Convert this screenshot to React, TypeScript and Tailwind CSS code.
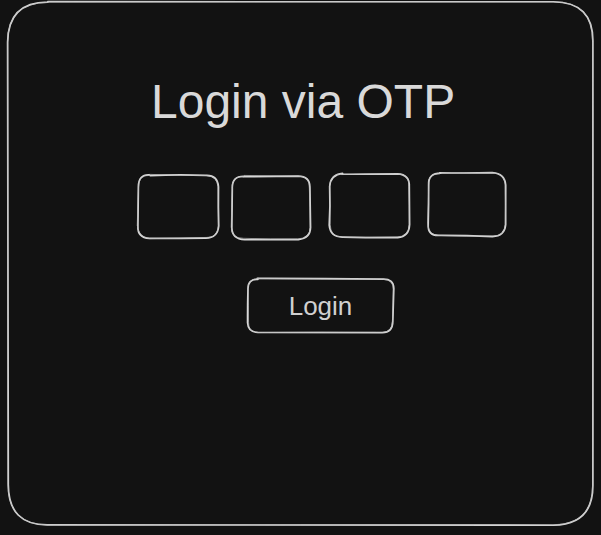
import React from 'react';

// small seeded rng so the wobble stays the same on every render
function rng(seed: number) {
  let s = seed;
  return () => {
    s = (s * 9301 + 49297) % 233280;
    return s / 233280 - 0.5;
  };
}

function sketchPath(w: number, h: number, r: number, seed: number, j: number) {
  const rand = rng(seed);
  const p = (v: number) => (v + rand() * j).toFixed(2);
  const m = (a: number, b: number) => (a + b) / 2;
  return [
    `M ${p(r)} ${p(0)}`,
    `Q ${p(m(r, w - r))} ${p(0)} ${p(w - r)} ${p(0)}`,
    `Q ${p(w)} ${p(0)} ${p(w)} ${p(r)}`,
    `Q ${p(w)} ${p(h / 2)} ${p(w)} ${p(h - r)}`,
    `Q ${p(w)} ${p(h)} ${p(w - r)} ${p(h)}`,
    `Q ${p(m(r, w - r))} ${p(h)} ${p(r)} ${p(h)}`,
    `Q ${p(0)} ${p(h)} ${p(0)} ${p(h - r)}`,
    `Q ${p(0)} ${p(h / 2)} ${p(0)} ${p(r)}`,
    `Q ${p(0)} ${p(0)} ${p(r)} ${p(0)}`,
  ].join(' ');
}

interface SketchBoxProps {
  w: number;
  h: number;
  r: number;
  seed: number;
  jitter?: number;
  className?: string;
  children?: React.ReactNode;
}

function SketchBox({ w, h, r, seed, jitter = 1.6, className, children }: SketchBoxProps) {
  return (
    <div className={`relative flex items-center justify-center ${className ?? ''}`} style={{ width: w, height: h }}>
      <svg
        className="pointer-events-none absolute inset-0 overflow-visible"
        width={w}
        height={h}
        fill="none"
      >
        <path d={sketchPath(w, h, r, seed, jitter)} stroke="#d8d8d8" strokeWidth={1.7} strokeLinecap="round" />
        <path d={sketchPath(w, h, r, seed + 17, jitter)} stroke="#bdbdbd" strokeWidth={0.9} strokeLinecap="round" opacity={0.8} />
      </svg>
      {children}
    </div>
  );
}

export default function App() {
  return (
    <div className="h-[535px] w-[601px] bg-[#121212] pl-[8px] pt-[2px] font-['Liberation_Sans',Arial,sans-serif]">
      <SketchBox w={585} h={523} r={40} seed={3} jitter={1} className="!items-start !justify-start">
        <div className="flex flex-col">
          <h1 className="ml-[143px] mt-[71px] text-[48px] leading-[58px] text-[#d9d9d9]">Login via OTP</h1>

          <div className="ml-[130px] mt-[42px] flex items-start">
            <SketchBox w={80} h={63} r={12} seed={11} className="mt-[2px]" />
            <SketchBox w={78} h={63} r={12} seed={23} className="ml-[14px] mt-[3px]" />
            <SketchBox w={79} h={63} r={12} seed={37} className="ml-[20px] mt-[1px]" />
            <SketchBox w={77} h={63} r={12} seed={51} className="ml-[19px]" />
          </div>

          <SketchBox w={145} h={53} r={10} seed={71} className="ml-[240px] mt-[40px]">
            <span className="text-[26px] leading-none text-[#d0d0d0]">Login</span>
          </SketchBox>
        </div>
      </SketchBox>
    </div>
  );
}
